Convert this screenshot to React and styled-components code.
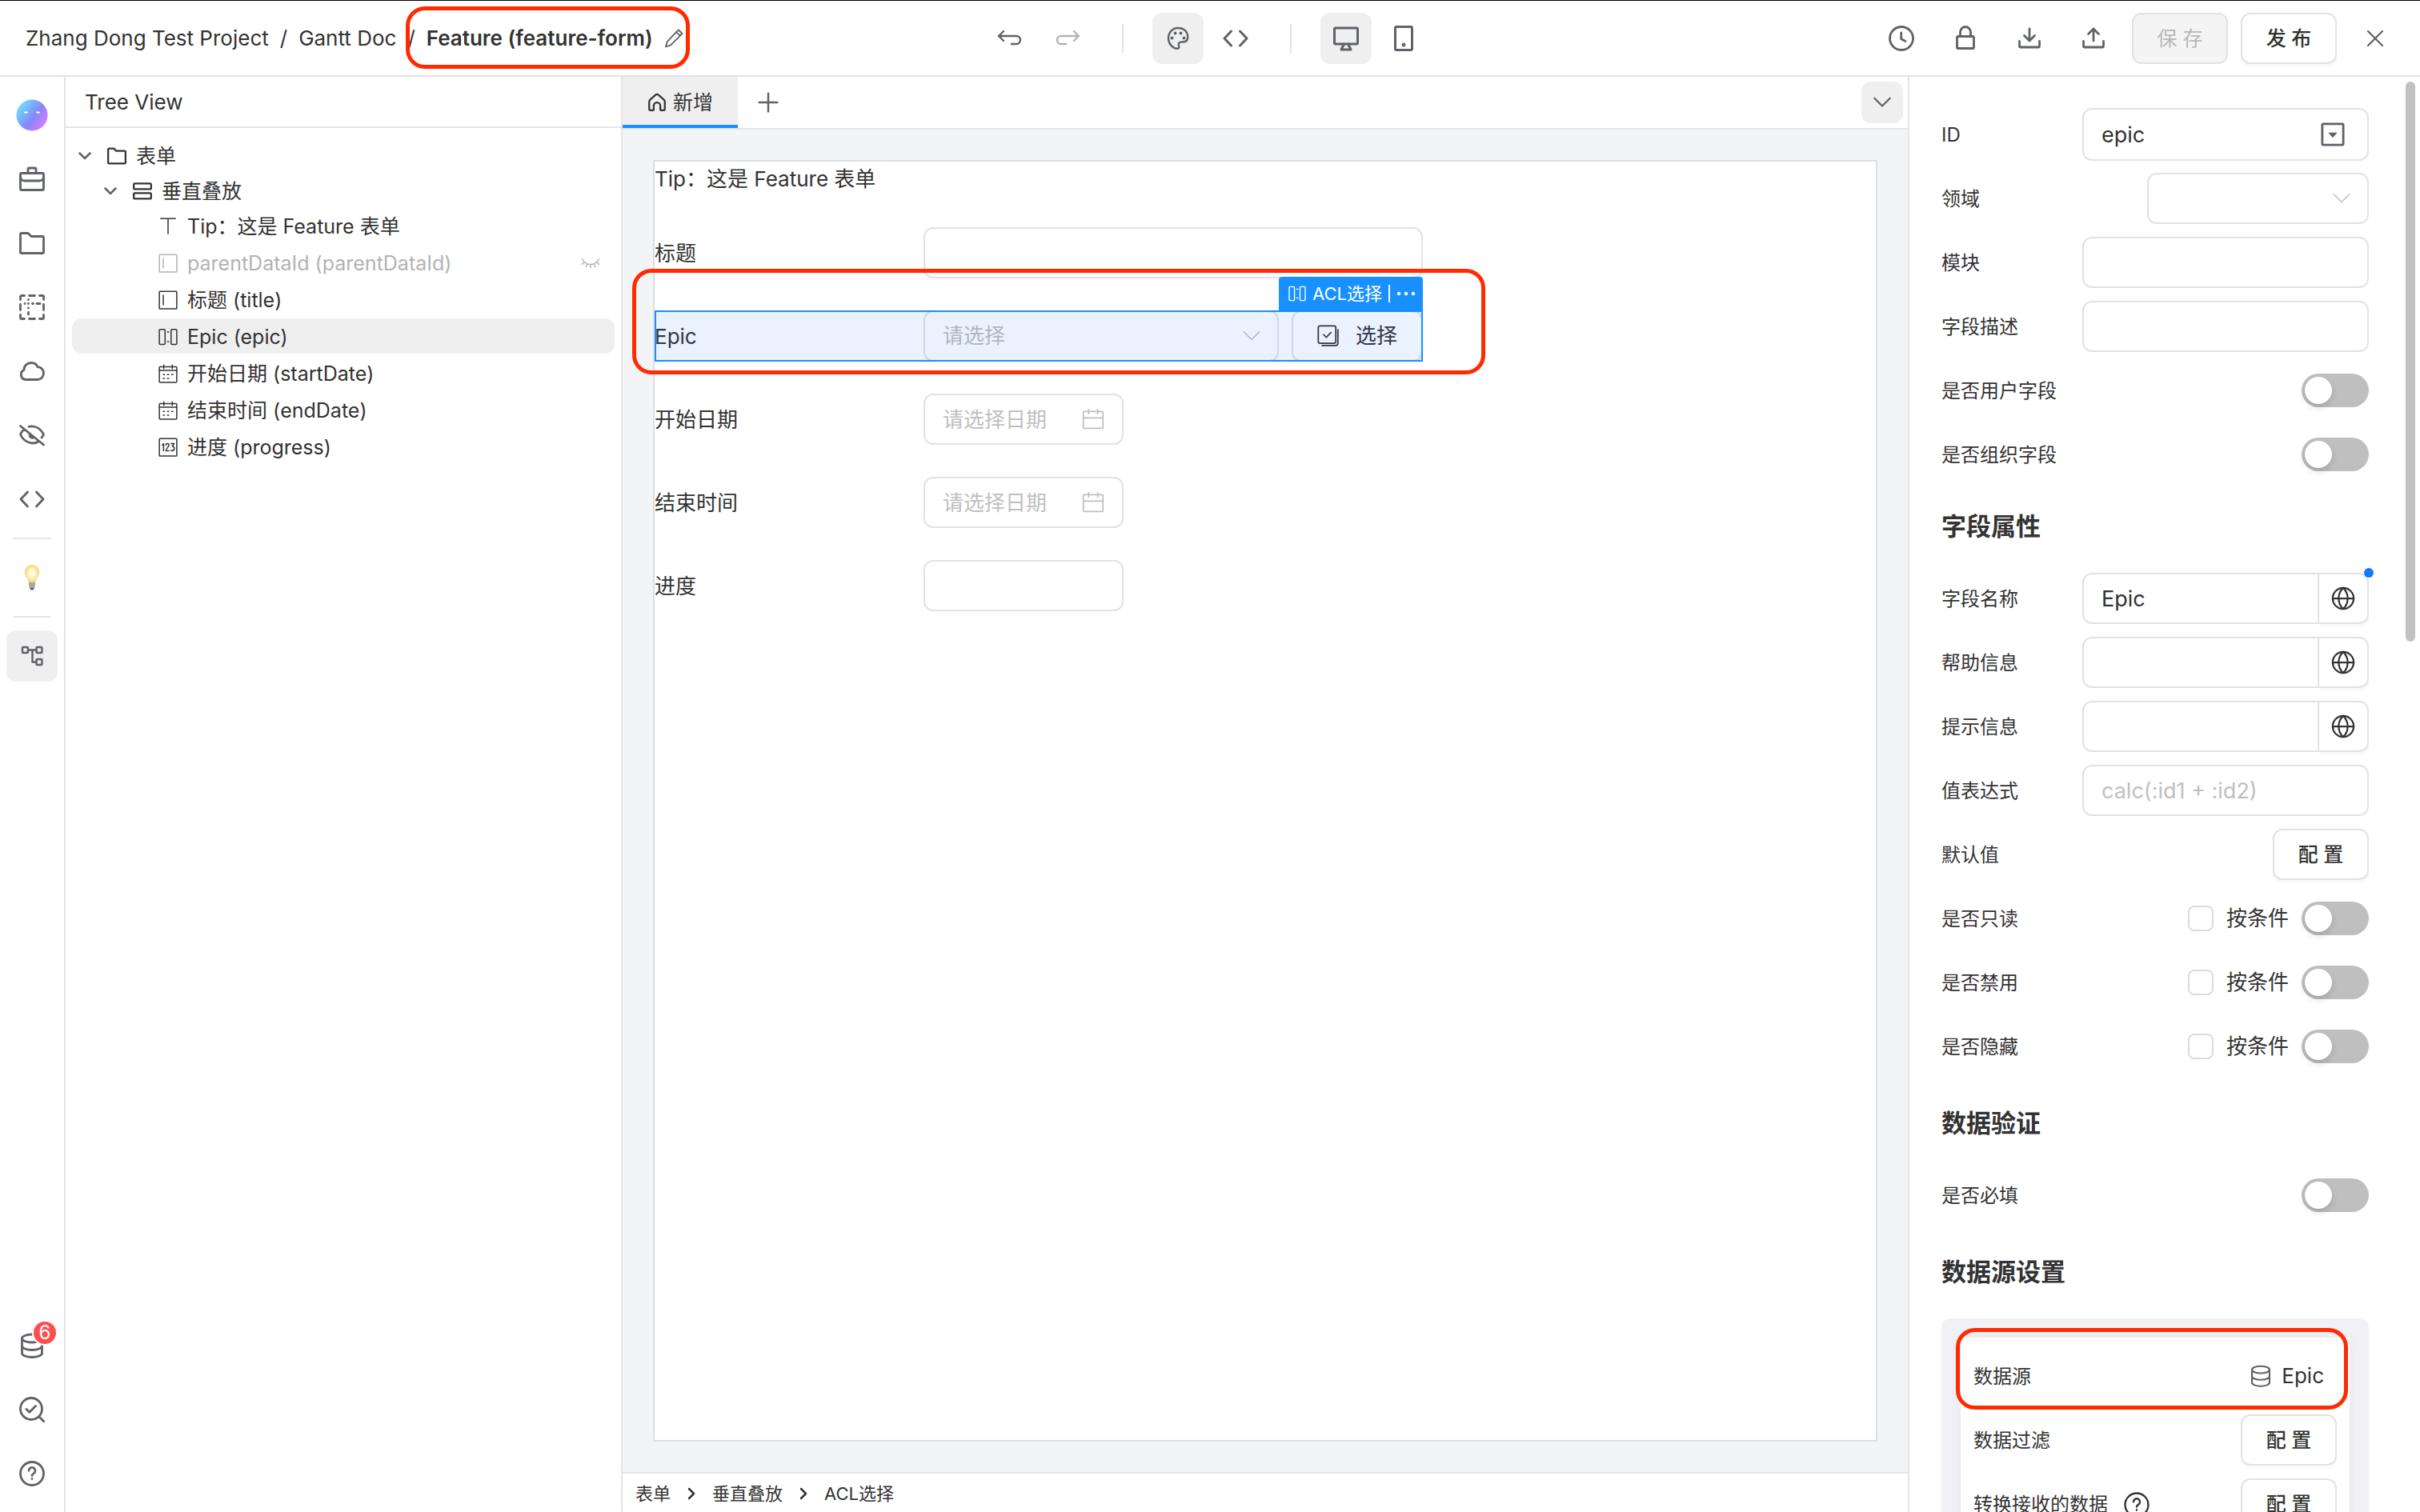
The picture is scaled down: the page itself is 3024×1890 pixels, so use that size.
import React from 'react';
import styled, { createGlobalStyle, css } from 'styled-components';

const GlobalStyle = createGlobalStyle`
  * {
    box-sizing: border-box;
  }

  body {
    margin: 0;
    color: #333;
    background: #fff;
    font-family: Inter, 'Noto Sans CJK SC', sans-serif;
    font-size: 26px;
    line-height: 40px;
  }

  button,
  input,
  select {
    margin: 0;
    font: inherit;
    color: inherit;
  }

  a {
    color: inherit;
    text-decoration: none;
  }
`;

/* ---------- icons ---------- */

const Svg = styled.svg`
  display: block;
  flex: none;
  fill: none;
  stroke: currentColor;
  stroke-linecap: round;
  stroke-linejoin: round;
`;

const glyphs = {
  pencil: <path d="M20 5.5 24 2l6 6-3.5 3.5M20 5.5 5 21.5 2.5 30l8-2.5 16-16Z" />,
  undo: <path d="M8 7 2 13l6 6M2 13h22a5 5 0 0 1 0 10h-6" />,
  redo: <path d="m24 7 6 6-6 6M30 13H8a5 5 0 0 0 0 10h6" />,
  palette: (
    <>
      <path d="M16 3C8.6 3 4 9 4 16c0 7 5.600 12.500 10.800 12.800 2 .1 2.900-1.200 2.400-2.900-.9-3.100-.6-5.100 2.600-5.300 3.600-.2 8.400.1 8.400-6.400C28.200 7.400 23.400 3 16 3Z" />
      <g fill="currentColor" stroke="none">
        <circle cx="8.5" cy="15.5" r="1.9" />
        <circle cx="12.5" cy="9.5" r="1.9" />
        <circle cx="19.5" cy="9.5" r="1.9" />
        <circle cx="23.5" cy="15.5" r="1.9" />
      </g>
    </>
  ),
  code: <path d="M10.5 7 2 16l8.5 9M21.5 7l8.5 9-8.5 9" />,
  monitor: (
    <>
      <rect x="1.5" y="3" width="29" height="20" rx="1.5" />
      <path d="m13.5 23-3.5 7h12l-3.500-7" />
    </>
  ),
  tablet: (
    <>
      <rect x="5.5" y="1.5" width="21" height="29" rx="1.5" />
      <circle cx="16" cy="24" r="1" />
    </>
  ),
  clock: (
    <>
      <circle cx="16" cy="16" r="14.5" />
      <path d="M15.700 9v7.800l5.300 2.700" />
    </>
  ),
  lock: (
    <>
      <rect x="5.5" y="13.5" width="21" height="15" rx="1.5" />
      <path d="M9.5 13V8.5a6.5 7 0 0 1 13 0V13" />
    </>
  ),
  download: <path d="M3.5 19.5v6A1.5 1.5 0 0 0 5 27h22a1.5 1.5 0 0 0 1.5-1.5v-6M16 4v15M9.5 12.5l6.5 6.5 6.5-6.5" />,
  upload: <path d="M3.5 19.5v6A1.5 1.5 0 0 0 5 27h22a1.5 1.5 0 0 0 1.5-1.5v-6M16 4v15M9.5 10.5 16 4l6.5 6.5" />,
  close: <path d="m4 4 24 24M28 4 4 28" />,
  chevron: <path d="m3 9 13 13L29 9" />,
  next: <path d="m10 4 12 12-12 12" />,
  plus: <path d="M16 2v28M2 16h28" />,
  home: (
    <path d="M3 14.5a4 4 0 0 1 1.5-3.1L14 3.3a3.2 3.2 0 0 1 4 0l9.5 8.1A4 4 0 0 1 29 14.5V27a2 2 0 0 1-2 2h-4.5a1 1 0 0 1-1-1v-6.5a5.5 5.5 0 0 0-11 0V28a1 1 0 0 1-1 1H5a2 2 0 0 1-2-2Z" />
  ),
  toolbox: (
    <>
      <rect x="1.5" y="8.5" width="29" height="21" rx="1.5" />
      <path d="M11 8V3.5A1.5 1.5 0 0 1 12.5 2h7A1.5 1.5 0 0 1 21 3.5V8M1.5 12.5a5 5 0 0 0 5 5.5h19a5 5 0 0 0 5-5.5" />
    </>
  ),
  folder: <path d="M3 3.5h8l4 4h14A1.5 1.5 0 0 1 30.5 9v18a1.5 1.5 0 0 1-1.5 1.5H3A1.5 1.5 0 0 1 1.5 27V5A1.5 1.5 0 0 1 3 3.5Z" />,
  layout: (
    <path d="M1.5 6.5V3A1.5 1.5 0 0 1 3 1.5h3.5M12.500 1.500h7M25.500 1.500H29A1.500 1.500 0 0 1 30.500 3v3.500M30.500 12.500v7M30.500 25.500V29a1.500 1.500 0 0 1-1.500 1.500h-3.500M19.500 30.500h-7M6.500 30.500H3A1.500 1.500 0 0 1 1.500 29v-3.500M1.500 19.500v-7M11.500 6.500v.1M11.500 17v.1M11.500 22.500v2.500M7 11.500h.1M11.500 11.500h.1M16.500 11.500h1M22 11.500h4" />
  ),
  cloud: <path d="M8 26.5A6.3 6.3 0 0 1 5.8 14.6C6 9 10 5.5 15 5.5c4 0 6.900 2.100 8.100 5.200 4.300.2 7.400 3.400 7.400 7.600 0 4.700-3.500 8.200-8 8.200Z" />,
  eyeOff: (
    <>
      <path d="M1.5 4.5 30.5 28M12 5.3c7.500-1.600 14.500 2 18.500 9.700-.7 1.600-1.500 2.800-2.500 4M6.200 8.500C4.200 10.200 2.600 12.500 1.500 15c4.200 9.500 14.500 13.700 22.500 9" />
      <path d="M13 15.500a3.500 3.500 0 0 0 5 3.500Z" fill="currentColor" />
    </>
  ),
  nodes: (
    <>
      <rect x="4" y="5" width="7" height="7" rx="1" />
      <rect x="21.5" y="5" width="7" height="7" rx="1" />
      <rect x="21.5" y="20" width="7" height="7" rx="1" />
      <path d="M11 8.500h10.500M16.500 8.500v15h5" />
    </>
  ),
  database: (
    <>
      <ellipse cx="16" cy="7" rx="12.5" ry="5" />
      <path d="M3.500 7v18.500c0 2.700 5.600 5 12.500 5s12.500-2.300 12.500-5V7M3.500 16.500c0 2.700 5.600 5 12.500 5s12.500-2.300 12.500-5" />
    </>
  ),
  inspect: (
    <>
      <circle cx="15" cy="15" r="13.5" />
      <path d="m25 25 6 6M9 15.500l3.800 3.800 7.700-7.700" />
    </>
  ),
  help: (
    <>
      <circle cx="16" cy="16" r="14.5" />
      <path d="M12 12.300a4 4 0 1 1 6.300 3.300c-1.600 1-2.300 1.600-2.300 2.900M16 22.300v.2" />
    </>
  ),
  stack: (
    <>
      <rect x="1.5" y="3" width="29" height="9.5" rx="2" />
      <rect x="1.5" y="19" width="29" height="9.5" rx="2" />
    </>
  ),
  type: <path d="M3 3h26M16 3v26" strokeLinecap="butt" />,
  input: (
    <>
      <rect x="1.5" y="1.5" width="29" height="29" rx="1" />
      <path d="M8 8v16" />
    </>
  ),
  acl: (
    <>
      <rect x="1.5" y="3.5" width="9.5" height="25" rx="1.5" />
      <rect x="21" y="3.5" width="9.5" height="25" rx="1.5" />
      <path d="M15 8h2M15 24h2" />
    </>
  ),
  schedule: (
    <>
      <rect x="1.5" y="4.5" width="29" height="26" rx="1.5" />
      <path d="M1.500 10.500h29M9 1.500v6M23 1.500v6M8 17.500h2M15 17.500h2M22 17.500h2M8 24h2M15 24h2" />
    </>
  ),
  number: (
    <>
      <rect x="1.5" y="1.5" width="29" height="29" rx="1" />
      <path d="M6.500 12.500 8.500 10v12M12.500 12.500c0-3.500 5-3.500 5 0 0 2.500-5 5.500-5 9.500h5M21 10h5l-2.800 4.500c4.300 0 4.300 7.500-.5 7.500-1 0-1.500-.3-1.700-.8" />
    </>
  ),
  lashes: <path d="M2 9c3 6 8 9 14 9s11-3 14-9M4.500 15 2 18M10 18l-1.500 4M16 18.500V23M22 18l1.500 4M27.500 15l2.500 3" />,
  calendar: (
    <>
      <rect x="2" y="5" width="28" height="24" rx="1" />
      <path d="M2 14h28M9.500 2v6M22.500 2v6" />
    </>
  ),
  pick: (
    <>
      <rect x="1.5" y="1.5" width="25" height="25" rx="2.5" />
      <path d="m9 14 4 4 6.500-7M29.500 7v19a3.500 3.500 0 0 1-3.500 3.500H7" />
    </>
  ),
  dropbox: (
    <>
      <rect x="2" y="2" width="28" height="28" rx="1.5" />
      <path d="M10 13.500h12L16 20.500Z" fill="currentColor" stroke="none" />
    </>
  ),
  globe: (
    <>
      <circle cx="16" cy="16" r="14" />
      <path d="M2 16h28M16 2c-8 7.500-8 20.500 0 28M16 2c8 7.500 8 20.500 0 28" />
    </>
  ),
  more: (
    <g fill="currentColor" stroke="none">
      <circle cx="4" cy="16" r="3" />
      <circle cx="16" cy="16" r="3" />
      <circle cx="28" cy="16" r="3" />
    </g>
  ),
};

const Icon = ({ name, size = 32, weight = 3 }) => (
  <Svg width={size} height={size} viewBox="0 0 32 32" strokeWidth={weight} aria-hidden="true">
    {glyphs[name]}
  </Svg>
);

const Logo = () => (
  <Svg width="40" height="40" viewBox="0 0 40 40" aria-hidden="true">
    <defs>
      <linearGradient id="logo" x1="0" y1="0.1" x2="1" y2="0.9">
        <stop offset="0.05" stopColor="#6fe6fb" />
        <stop offset="0.55" stopColor="#8488fb" />
        <stop offset="0.95" stopColor="#e07bff" />
      </linearGradient>
    </defs>
    <circle cx="20" cy="20" r="19.5" fill="url(#logo)" stroke="none" />
    <path d="M11 16.500h3M26 16.500h3" stroke="#fff" strokeWidth="2" />
  </Svg>
);

const Bulb = () => (
  <Svg width="32" height="32" viewBox="0 0 32 32" aria-hidden="true">
    <defs>
      <radialGradient id="bulb">
        <stop offset="0.3" stopColor="#fffbe8" />
        <stop offset="1" stopColor="#fbd978" />
      </radialGradient>
    </defs>
    <path
      d="M16 .5c5 0 8.800 3.700 8.800 8.500 0 4.800-4.300 7.500-4.800 12.500h-8C11.500 16.500 7.200 13.800 7.200 9 7.200 4.200 11 .5 16 .5Z"
      fill="url(#bulb)"
      stroke="#f6d67c"
      strokeWidth="1"
    />
    <path d="M12 22h8v5l-2 4h-4l-2-4Z" fill="#a8a8a8" stroke="none" />
    <path d="M13.500 29h5l-1 2.500h-3Z" fill="#555" stroke="none" />
  </Svg>
);

/* ---------- shared parts ---------- */

const IconButton = styled.button`
  position: relative;
  display: flex;
  align-items: center;
  justify-content: center;
  width: ${(p) => p.$width || 64}px;
  height: 64px;
  padding: 0;
  border: 0;
  border-radius: 12px;
  color: ${(p) => (p.disabled ? '#b3b3b3' : '#5f6268')};
  background: ${(p) => (p.$active ? '#efefef' : 'transparent')};
`;

const Button = styled.button`
  display: flex;
  align-items: center;
  justify-content: center;
  gap: 20px;
  flex: none;
  width: ${(p) => p.$width || 120}px;
  height: 64px;
  padding: 0;
  border: 2px solid #e2e2e2;
  border-radius: 12px;
  background: #fff;
  box-shadow: 0 4px 0 rgba(0, 0, 0, 0.02);
  font-size: 25px;
  font-weight: 500;

  &:disabled {
    color: #b8b8b8;
    background: #f4f4f4;
    box-shadow: none;
    font-weight: 400;
  }
`;

const Outline = styled.span`
  position: absolute;
  inset: ${(p) => p.$inset};
  z-index: 5;
  border: 5px solid #ff2a00;
  border-radius: 24px;
  pointer-events: none;
`;

const field = css`
  width: 100%;
  min-width: 0;
  height: 64px;
  padding: 0 22px;
  border: 2px solid #e2e2e2;
  border-radius: 12px;
  outline: 0;
  background: #fff;

  &::placeholder {
    color: #bfbfbf;
    opacity: 1;
  }
`;

const TextInput = styled.input`
  ${field}
  ${(p) =>
    p.$tall &&
    css`
      height: 66px;
    `}
`;

const Select = styled.select`
  ${field}
  appearance: none;
  color: #bfbfbf;
`;

const FieldBox = styled.div`
  position: relative;
  display: flex;
  width: ${(p) => p.$width || '100%'};
`;

const FieldIcon = styled.span`
  position: absolute;
  top: 0;
  bottom: 0;
  right: ${(p) => p.$right || 22}px;
  display: flex;
  align-items: center;
  color: ${(p) => p.$color || '#bfbfbf'};
  pointer-events: none;
`;

/* ---------- page frame ---------- */

const Page = styled.div`
  display: flex;
  flex-direction: column;
  height: 100vh;
  overflow: hidden;
`;

const Header = styled.header`
  display: grid;
  grid-template-columns: 1fr auto 1fr;
  align-items: center;
  flex: none;
  height: 96px;
  padding: 0 40px 0 32px;
  border-top: 1px solid #000;
  border-bottom: 2px solid #e2e2e2;
`;

const Crumbs = styled.nav`
  display: flex;
  align-items: center;
  gap: 14px;
  white-space: nowrap;
`;

const Current = styled.span`
  position: relative;
  display: flex;
  align-items: center;
  gap: 14px;
  font-weight: 600;
`;

const PlainButton = styled.button`
  display: flex;
  align-items: center;
  gap: 12px;
  padding: 0;
  border: 0;
  background: none;
  color: #5f6268;
`;

const Tools = styled.div`
  display: flex;
  align-items: center;
  gap: 8px;
`;

const Divider = styled.span`
  width: 2px;
  height: 36px;
  margin: 0 28px;
  background: #e2e2e2;
`;

const Actions = styled.div`
  display: flex;
  justify-content: flex-end;
  gap: 16px;
`;

const CloseSlot = styled.div`
  padding-left: 16px;
`;

const Body = styled.div`
  display: flex;
  flex: 1;
  min-height: 0;
`;

const Rail = styled.nav`
  display: flex;
  flex-direction: column;
  align-items: center;
  gap: 16px;
  flex: none;
  width: 82px;
  padding: 16px 0;
  border-right: 2px solid #e5e5e5;
`;

const RailLine = styled.hr`
  width: 48px;
  height: 2px;
  margin: 0;
  border: 0;
  background: #e5e5e5;
`;

const Spacer = styled.div`
  flex: 1;
`;

const Badge = styled.span`
  position: absolute;
  top: 2px;
  right: 2px;
  width: 28px;
  height: 28px;
  border-radius: 14px;
  background: #ff4d4f;
  box-shadow: 0 0 0 2px #fff;
  color: #fff;
  font-size: 24px;
  line-height: 28px;
  text-align: center;
`;

/* ---------- tree ---------- */

const TreePanel = styled.aside`
  display: flex;
  flex-direction: column;
  flex: none;
  width: 696px;
  border-right: 2px solid #e5e5e5;
`;

const TreeTitle = styled.h2`
  flex: none;
  height: 64px;
  margin: 0;
  padding: 0 24px;
  border-bottom: 2px solid #e5e5e5;
  font-size: 26px;
  font-weight: 400;
  line-height: 64px;
`;

const TreeList = styled.ul`
  margin: 0;
  padding: 12px 8px;
  list-style: none;
`;

const TreeRow = styled.li`
  display: flex;
  align-items: center;
  gap: 12px;
  height: 44px;
  margin-bottom: ${(p) => (p.$leaf ? 2 : 0)}px;
  padding: 2px 18px 0 ${(p) => 8 + p.$depth * 32}px;
  border-radius: 12px;
  color: ${(p) => (p.$muted ? '#b3b3b3' : '#333')};
  background: ${(p) => (p.$selected ? '#efefef' : 'transparent')};
  font-size: 25px;

  & > span:nth-child(3) {
    flex: 1;
  }
`;

const Twisty = styled.span`
  display: flex;
  width: 24px;
  color: #5f6268;
`;

const nodes = [
  { label: '表单', icon: 'folder', depth: 0, open: true },
  { label: '垂直叠放', icon: 'stack', depth: 1, open: true },
  { label: 'Tip：这是 Feature 表单', icon: 'type', depth: 2 },
  { label: 'parentDataId (parentDataId)', icon: 'input', depth: 2, muted: true },
  { label: '标题 (title)', icon: 'input', depth: 2 },
  { label: 'Epic (epic)', icon: 'acl', depth: 2, selected: true },
  { label: '开始日期 (startDate)', icon: 'schedule', depth: 2 },
  { label: '结束时间 (endDate)', icon: 'schedule', depth: 2 },
  { label: '进度 (progress)', icon: 'number', depth: 2 },
];

const Tree = () => (
  <TreePanel>
    <TreeTitle>Tree View</TreeTitle>
    <TreeList>
      {nodes.map((node) => (
        <TreeRow
          key={node.label}
          $depth={node.depth}
          $leaf={!node.open}
          $muted={node.muted}
          $selected={node.selected}
        >
          <Twisty>{node.open && <Icon name="chevron" size={16} weight={5} />}</Twisty>
          <Icon name={node.icon} size={24} weight={node.open ? 3 : 2} />
          <span>{node.label}</span>
          {node.muted && <Icon name="lashes" size={24} weight={2} />}
        </TreeRow>
      ))}
    </TreeList>
  </TreePanel>
);

/* ---------- canvas ---------- */

const Main = styled.main`
  display: flex;
  flex-direction: column;
  flex: 1;
  min-width: 0;
`;

const TabBar = styled.div`
  display: flex;
  align-items: center;
  gap: 8px;
  flex: none;
  height: 66px;
  padding-right: 6px;
  border-bottom: 2px solid #e2e4e6;
`;

const Tab = styled.button`
  display: flex;
  align-items: center;
  justify-content: center;
  gap: 8px;
  width: 144px;
  height: 64px;
  padding: 4px 0 0;
  border: 0;
  border-bottom: 4px solid #1890ff;
  background: #efefef;
  font-size: 25px;
`;

const CollapseButton = styled(IconButton)`
  width: 52px;
  height: 52px;
  margin-left: auto;
`;

const Stage = styled.div`
  display: flex;
  flex: 1;
  min-height: 0;
  padding: 38px;
  background: #f3f4f6;
`;

const Sheet = styled.div`
  flex: 1;
  border: 2px solid #dcdee0;
  background: #fff;
`;

const Tip = styled.p`
  margin: 0 0 38px;
  line-height: 44px;
`;

const Form = styled.form`
  display: flex;
  flex-direction: column;
  gap: 40px;
  max-width: 960px;
`;

const FormRow = styled.div`
  position: relative;
  display: grid;
  grid-template-columns: 336px 1fr;
  align-items: center;
  height: 64px;

  & > label {
    padding-top: 2px;
  }
`;

const Picker = styled.div`
  display: flex;
  gap: 16px;
`;

const PickButton = styled(Button)`
  font-size: 26px;
  font-weight: 400;
`;

const Selection = styled.div`
  position: absolute;
  inset: 0;
  border: 2px solid #1890ff;
  background: rgba(22, 104, 255, 0.09);
  pointer-events: none;
`;

const SelectionTag = styled.div`
  position: absolute;
  right: 0;
  bottom: 100%;
  display: flex;
  align-items: center;
  gap: 8px;
  width: 180px;
  height: 42px;
  padding: 0 10px 0 12px;
  border-radius: 4px 4px 0 0;
  background: #1890ff;
  color: #fff;
  font-size: 22px;
  white-space: nowrap;

  & > button {
    height: 22px;
    padding-left: 8px;
    border-left: 2px solid #fff;
    color: #fff;
  }
`;

const PathBar = styled.nav`
  display: flex;
  align-items: center;
  gap: 18px;
  flex: none;
  height: 50px;
  padding: 2px 16px 0;
  border-top: 2px solid #e5e5e5;
  font-size: 22px;
`;

const DateField = ({ id }) => (
  <FieldBox $width="250px">
    <TextInput id={id} placeholder="请选择日期" />
    <FieldIcon $right={24}>
      <Icon name="calendar" size={28} weight={2} />
    </FieldIcon>
  </FieldBox>
);

const Canvas = () => (
  <Main>
    <TabBar>
      <Tab>
        <Icon name="home" size={24} />
        新增
      </Tab>
      <IconButton $width={60} aria-label="Add tab">
        <Icon name="plus" size={26} />
      </IconButton>
      <CollapseButton $active aria-label="More tabs">
        <Icon name="chevron" size={24} />
      </CollapseButton>
    </TabBar>
    <Stage>
      <Sheet>
        <Tip>Tip：这是 Feature 表单</Tip>
        <Form>
          <FormRow>
            <label htmlFor="title">标题</label>
            <TextInput id="title" />
          </FormRow>
          <FormRow>
            <label htmlFor="epic">Epic</label>
            <Picker>
              <FieldBox>
                <Select id="epic">
                  <option>请选择</option>
                </Select>
                <FieldIcon>
                  <Icon name="chevron" size={24} weight={2} />
                </FieldIcon>
              </FieldBox>
              <PickButton type="button" $width={164}>
                <Icon name="pick" size={28} weight={2} />
                选择
              </PickButton>
            </Picker>
            <Selection />
            <SelectionTag>
              <Icon name="acl" size={22} weight={2} />
              ACL选择
              <PlainButton type="button" aria-label="More actions">
                <Icon name="more" size={24} />
              </PlainButton>
            </SelectionTag>
            <Outline $inset="-52px -78px -16px -28px" />
          </FormRow>
          <FormRow>
            <label htmlFor="start">开始日期</label>
            <DateField id="start" />
          </FormRow>
          <FormRow>
            <label htmlFor="end">结束时间</label>
            <DateField id="end" />
          </FormRow>
          <FormRow>
            <label htmlFor="progress">进度</label>
            <FieldBox $width="250px">
              <TextInput id="progress" />
            </FieldBox>
          </FormRow>
        </Form>
      </Sheet>
    </Stage>
    <PathBar>
      <a href="#form">表单</a>
      <Icon name="next" size={16} weight={5} />
      <a href="#stack">垂直叠放</a>
      <Icon name="next" size={16} weight={5} />
      <a href="#acl">ACL选择</a>
    </PathBar>
  </Main>
);

/* ---------- properties ---------- */

const Panel = styled.aside`
  position: relative;
  flex: none;
  width: 640px;
  padding: 40px 64px 0 40px;
  border-left: 2px solid #e5e5e5;
  overflow: hidden;

  ${TextInput} {
    font-size: 27px;
  }
`;

const ScrollThumb = styled.span`
  position: absolute;
  top: 6px;
  right: 6px;
  width: 12px;
  height: 39%;
  border-radius: 6px;
  background: #c1c1c1;
`;

const Rows = styled.div`
  display: flex;
  flex-direction: column;
  gap: 16px;
`;

const Row = styled.div`
  position: relative;
  display: flex;
  align-items: center;
  justify-content: space-between;
  height: 64px;
`;

const Label = styled.label`
  display: flex;
  align-items: center;
  gap: 20px;
  padding-top: 2px;
  font-size: 24px;
`;

const Heading = styled.h3`
  margin: 0;
  padding: ${(p) => (p.$first ? 34 : 40)}px 0 34px;
  font-size: 31px;
  font-weight: 600;
  line-height: 48px;
`;

const Switch = styled.input`
  appearance: none;
  width: 84px;
  height: 42px;
  padding: 4px;
  border-radius: 21px;
  background: #bfbfbf;

  &::before {
    content: '';
    display: block;
    width: 34px;
    height: 34px;
    border-radius: 50%;
    background: #fff;
    box-shadow: 0 4px 8px rgba(0, 0, 0, 0.15);
  }
`;

const Condition = styled.div`
  display: flex;
  align-items: center;
  gap: 16px;

  label {
    display: flex;
    align-items: center;
    gap: 16px;
  }
`;

const CheckBox = styled.input`
  appearance: none;
  width: 32px;
  height: 32px;
  border: 2px solid #dcdcdc;
  border-radius: 8px;
`;

const GlobeButton = styled.button`
  display: flex;
  align-items: center;
  justify-content: center;
  flex: none;
  width: 62px;
  height: 64px;
  padding: 0;
  border: 2px solid #e2e2e2;
  border-left-width: 0;
  border-radius: 0 12px 12px 0;
  background: #fff;
  box-shadow: 0 4px 0 rgba(0, 0, 0, 0.02);
`;

const Joined = styled(FieldBox)`
  input {
    border-radius: 12px 0 0 12px;
  }
`;

const Dot = styled.span`
  position: absolute;
  top: -6px;
  right: -6px;
  width: 12px;
  height: 12px;
  border-radius: 6px;
  background: #1677ff;
`;

const SourceBox = styled.section`
  padding: 24px;
  border-radius: 12px;
  background: #f0f0f5;
`;

const SourceCard = styled.div`
  position: relative;
  padding: 16px;
  background: #fff;
  box-shadow: 0 0 12px rgba(0, 0, 0, 0.05);
`;

const SourceButton = styled(PlainButton)`
  padding: 0 16px;

  span {
    color: #333;
  }
`;

const SwitchRow = ({ id, label, conditional }) => (
  <Row>
    <Label htmlFor={id}>{label}</Label>
    <Condition>
      {conditional && (
        <label>
          <CheckBox type="checkbox" />
          按条件
        </label>
      )}
      <Switch id={id} type="checkbox" role="switch" />
    </Condition>
  </Row>
);

const LocaleRow = ({ id, label, value, dot }) => (
  <Row>
    <Label htmlFor={id}>{label}</Label>
    <Joined $width="358px">
      <TextInput id={id} defaultValue={value} />
      <GlobeButton aria-label={`${label} translations`}>
        <Icon name="globe" size={30} weight={2.4} />
      </GlobeButton>
      {dot && <Dot />}
    </Joined>
  </Row>
);

const Properties = () => (
  <Panel>
    <Rows>
      <Row>
        <Label htmlFor="id">ID</Label>
        <FieldBox $width="358px">
          <TextInput id="id" defaultValue="epic" $tall />
          <FieldIcon $right={30} $color="#5f6268">
            <Icon name="dropbox" size={30} />
          </FieldIcon>
        </FieldBox>
      </Row>
      <Row>
        <Label htmlFor="domain">领域</Label>
        <FieldBox $width="277px">
          <Select id="domain" />
          <FieldIcon>
            <Icon name="chevron" size={24} weight={2} />
          </FieldIcon>
        </FieldBox>
      </Row>
      <Row>
        <Label htmlFor="module">模块</Label>
        <FieldBox $width="358px">
          <TextInput id="module" />
        </FieldBox>
      </Row>
      <Row>
        <Label htmlFor="description">字段描述</Label>
        <FieldBox $width="358px">
          <TextInput id="description" />
        </FieldBox>
      </Row>
      <SwitchRow id="user-field" label="是否用户字段" />
      <SwitchRow id="org-field" label="是否组织字段" />
    </Rows>

    <Heading $first>字段属性</Heading>
    <Rows>
      <LocaleRow id="name" label="字段名称" value="Epic" dot />
      <LocaleRow id="help" label="帮助信息" />
      <LocaleRow id="hint" label="提示信息" />
      <Row>
        <Label htmlFor="expression">值表达式</Label>
        <FieldBox $width="358px">
          <TextInput id="expression" placeholder="calc(:id1 + :id2)" />
        </FieldBox>
      </Row>
      <Row>
        <Label as="span">默认值</Label>
        <Button>配 置</Button>
      </Row>
      <SwitchRow id="readonly" label="是否只读" conditional />
      <SwitchRow id="disabled" label="是否禁用" conditional />
      <SwitchRow id="hidden" label="是否隐藏" conditional />
    </Rows>

    <Heading>数据验证</Heading>
    <Rows>
      <SwitchRow id="required" label="是否必填" />
    </Rows>

    <Heading>数据源设置</Heading>
    <SourceBox>
      <SourceCard>
        <Rows>
          <Row>
            <Label as="span">数据源</Label>
            <SourceButton>
              <Icon name="database" size={28} weight={2.4} />
              <span>Epic</span>
            </SourceButton>
            <Outline $inset="-28px -14px -10px -22px" />
          </Row>
          <Row>
            <Label as="span">数据过滤</Label>
            <Button>配 置</Button>
          </Row>
          <Row>
            <Label as="span">
              转换接收的数据
              <Icon name="help" size={32} weight={2.4} />
            </Label>
            <Button>配 置</Button>
          </Row>
        </Rows>
      </SourceCard>
    </SourceBox>
    <ScrollThumb />
  </Panel>
);

/* ---------- app ---------- */

const App = () => (
  <Page>
    <GlobalStyle />
    <Header>
      <Crumbs>
        <a href="#project">Zhang Dong Test Project</a>
        <span>/</span>
        <a href="#doc">Gantt Doc</a>
        <span>/</span>
        <Current>
          Feature (feature-form)
          <PlainButton aria-label="Rename">
            <Icon name="pencil" size={24} weight={2.4} />
          </PlainButton>
          <Outline $inset="-20px -8px -18px -26px" />
        </Current>
      </Crumbs>
      <Tools>
        <IconButton aria-label="Undo">
          <Icon name="undo" weight={2.4} />
        </IconButton>
        <IconButton aria-label="Redo" disabled>
          <Icon name="redo" weight={2.4} />
        </IconButton>
        <Divider />
        <IconButton $active aria-label="Design">
          <Icon name="palette" weight={2.4} />
        </IconButton>
        <IconButton aria-label="Code">
          <Icon name="code" />
        </IconButton>
        <Divider />
        <IconButton $active aria-label="Desktop">
          <Icon name="monitor" />
        </IconButton>
        <IconButton aria-label="Tablet">
          <Icon name="tablet" />
        </IconButton>
      </Tools>
      <Actions>
        {['clock', 'lock', 'download', 'upload'].map((name) => (
          <IconButton key={name} aria-label={name}>
            <Icon name={name} weight={2.8} />
          </IconButton>
        ))}
        <Button disabled>保 存</Button>
        <Button>发 布</Button>
        <CloseSlot>
          <IconButton $width={32} aria-label="Close">
            <Icon name="close" size={24} />
          </IconButton>
        </CloseSlot>
      </Actions>
    </Header>
    <Body>
      <Rail>
        <IconButton aria-label="Assistant">
          <Logo />
        </IconButton>
        {['toolbox', 'folder', 'layout', 'cloud', 'eyeOff', 'code'].map((name) => (
          <IconButton key={name} aria-label={name}>
            <Icon name={name} weight={2.8} />
          </IconButton>
        ))}
        <RailLine />
        <IconButton aria-label="Tips">
          <Bulb />
        </IconButton>
        <RailLine />
        <IconButton $active aria-label="Tree view">
          <Icon name="nodes" weight={2.4} />
        </IconButton>
        <Spacer />
        <IconButton aria-label="Data sources">
          <Icon name="database" weight={2.8} />
          <Badge>6</Badge>
        </IconButton>
        <IconButton aria-label="Inspect">
          <Icon name="inspect" weight={2.8} />
        </IconButton>
        <IconButton aria-label="Help">
          <Icon name="help" weight={2.8} />
        </IconButton>
      </Rail>
      <Tree />
      <Canvas />
      <Properties />
    </Body>
  </Page>
);

export default App;
